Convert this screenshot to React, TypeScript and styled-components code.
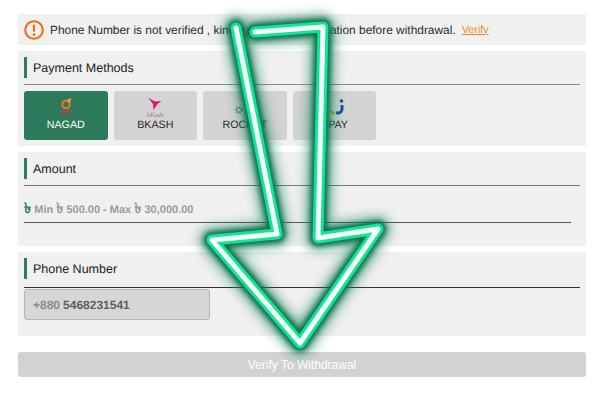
import React from 'react';
import styled, { createGlobalStyle } from 'styled-components';

const GlobalStyle = createGlobalStyle`
  html, body {
    margin: 0;
    background: #fff;
    font-family: "Liberation Sans", Arial, sans-serif;
    text-rendering: geometricPrecision;
  }
`;

const Page = styled.div`
  position: relative;
  width: 600px;
  height: 400px;
  overflow: hidden;
  box-sizing: border-box;
  padding: 14px 14px 0 18px;
  display: flex;
  flex-direction: column;
  gap: 6px;
`;

const Alert = styled.div`
  height: 31px;
  background: #f0f0f0;
  display: flex;
  align-items: center;
  padding-left: 6px;
  font-size: 11.92px;
  color: #2b2b2b;
`;

const AlertIcon = styled.svg`
  width: 20px;
  height: 20px;
  margin-right: 6px;
`;

const VerifyLink = styled.a`
  color: #f08a24;
  text-decoration: underline;
  font-size: 10.8px;
  margin-left: 6px;
`;

const Panel = styled.section<{ $height: number }>`
  height: ${(p) => p.$height}px;
  box-sizing: border-box;
  background: #f0f0f0;
  padding: 6px;
`;

const Title = styled.h3`
  margin: 0;
  height: 21px;
  border-left: 3px solid #2c7f5e;
  padding-left: 6px;
  font-size: 12.5px;
  font-weight: 400;
  line-height: 22px;
  color: #222;
`;

const Rule = styled.div<{ $color: string; $top: number; $bottom: number }>`
  height: 1px;
  background: ${(p) => p.$color};
  margin: ${(p) => p.$top}px 0 ${(p) => p.$bottom}px;
`;

const Tiles = styled.div`
  display: flex;
  gap: 6px;
`;

const Tile = styled.div<{ $active?: boolean }>`
  width: 83.5px;
  height: 49px;
  box-sizing: border-box;
  border-radius: 3px;
  background: ${(p) => (p.$active ? '#2c7a5b' : '#d3d3d3')};
  color: ${(p) => (p.$active ? '#fff' : '#2a2a2a')};
  font-size: 10.7px;
  display: flex;
  flex-direction: column;
  align-items: center;
  padding-top: 6px;
`;

const TileLogo = styled.svg`
  width: 30px;
  height: 22px;
`;

const LogoCaption = styled.text`
  font-family: "Liberation Serif", serif;
  font-size: 6.5px;
  fill: #a8718a;
`;

const AmountField = styled.div`
  width: 547px;
  height: 31px;
  box-sizing: border-box;
  border-bottom: 1px solid #555;
  display: flex;
  align-items: center;
  gap: 3px;
  padding-top: 5px;
  font-size: 11px;
  font-weight: 700;
  color: #9a9a9a;
`;

const TakaMark = styled.span<{ $green?: boolean }>`
  color: ${(p) => (p.$green ? '#2c7a5b' : '#9a9a9a')};
  font-size: 14.5px;
`;

const PhoneField = styled.div`
  width: 186px;
  height: 31px;
  box-sizing: border-box;
  background: #d6d6d6;
  border: 1px solid #b4b4b4;
  border-radius: 3px;
  display: flex;
  align-items: center;
  padding-left: 8px;
  font-size: 12px;
  font-weight: 700;
  color: #5e5e5e;
`;

const Prefix = styled.span`
  color: #8a8a8a;
  margin-right: 3px;
`;

const SubmitButton = styled.button`
  margin-top: 10px;
  height: 25px;
  width: 568px;
  border: 0;
  border-radius: 3px;
  background: #d2d2d2;
  color: #fff;
  font-family: inherit;
  font-size: 12px;
`;

const ArrowOverlay = styled.svg`
  position: absolute;
  left: 0;
  top: 0;
  width: 600px;
  height: 400px;
  pointer-events: none;
`;

const NeonLine = styled.polyline<{ $color: string; $width: number; $blur: number; $opacity?: number }>`
  fill: none;
  stroke: ${(p) => p.$color};
  stroke-width: ${(p) => p.$width};
  stroke-linejoin: round;
  stroke-linecap: round;
  opacity: ${(p) => p.$opacity ?? 1};
  filter: blur(${(p) => p.$blur}px);
`;

const arrowPoints = '255,32 323,27 318,238 378,229 300,343 212,240 277,234 236,28';

const App: React.FC = () => (
  <Page>
    <GlobalStyle />
    <Alert>
      <AlertIcon viewBox="0 0 20 20">
        <circle cx="10" cy="10" r="8.8" fill="none" stroke="#ee6c12" strokeWidth="2" />
        <rect x="8.9" y="4.4" width="2.2" height="7.4" rx="1" fill="#ee6c12" />
        <circle cx="10" cy="14.6" r="1.3" fill="#ee6c12" />
      </AlertIcon>
      Phone Number is not verified , kindly complete verification before withdrawal.
      <VerifyLink>Verify</VerifyLink>
    </Alert>

    <Panel $height={95}>
      <Title>Payment Methods</Title>
      <Rule $color="#8c8c8c" $top={6} $bottom={6} />
      <Tiles>
        <Tile $active>
          <TileLogo viewBox="0 0 30 22">
            <circle cx="15" cy="7.5" r="3.8" fill="none" stroke="#f0732a" strokeWidth="2" />
            <path d="M16 2.5l4.5-1.2-1.6 4.6z" fill="#f3a12a" />
            <path d="M9.5 14.5h11M11 14.5v3.5M15 14.5v3.5M19 14.5v3.5" stroke="#e0342b" strokeWidth="1.2" />
          </TileLogo>
          NAGAD
        </Tile>
        <Tile>
          <TileLogo viewBox="0 0 30 22">
            <path d="M8.5 1L15 4.5 21.5 4 17.5 7 13.5 13 13 7z" fill="#e2136e" />
            <LogoCaption x="7" y="19.5">bKash</LogoCaption>
          </TileLogo>
          BKASH
        </Tile>
        <Tile>
          <TileLogo viewBox="0 0 30 22">
            <circle cx="9" cy="13" r="2.6" fill="none" stroke="#666b7e" strokeWidth="2" strokeDasharray="1.6 0.8" />
          </TileLogo>
          ROCKET
        </Tile>
        <Tile>
          <TileLogo viewBox="0 0 30 22">
            <path d="M23 8v4a4 4 0 0 1-4 4h-2" fill="none" stroke="#1d4f9e" strokeWidth="3" />
            <circle cx="22.5" cy="4" r="1.8" fill="#1d4f9e" />
            <path d="M10 13.5l6 3.5" stroke="#a9b52d" strokeWidth="2.4" />
          </TileLogo>
          UPAY
        </Tile>
      </Tiles>
    </Panel>

    <Panel $height={94}>
      <Title>Amount</Title>
      <Rule $color="#777" $top={6} $bottom={6} />
      <AmountField>
        <TakaMark $green>৳</TakaMark> Min <TakaMark>৳</TakaMark> 500.00 - Max <TakaMark>৳</TakaMark> 30,000.00
      </AmountField>
    </Panel>

    <Panel $height={84}>
      <Title>Phone Number</Title>
      <Rule $color="#333" $top={8} $bottom={1} />
      <PhoneField>
        <Prefix>+880</Prefix> 5468231541
      </PhoneField>
    </Panel>

    <SubmitButton>Verify To Withdrawal</SubmitButton>

    <ArrowOverlay viewBox="0 0 600 400">
      <NeonLine points={arrowPoints} $color="#0a7f55" $width={26} $blur={6} $opacity={0.55} />
      <NeonLine points={arrowPoints} $color="#066f49" $width={17} $blur={2.5} />
      <NeonLine points={arrowPoints} $color="#10e596" $width={11} $blur={0.5} />
      <NeonLine points={arrowPoints} $color="#f4fff9" $width={5} $blur={0.7} />
    </ArrowOverlay>
  </Page>
);

export default App;
